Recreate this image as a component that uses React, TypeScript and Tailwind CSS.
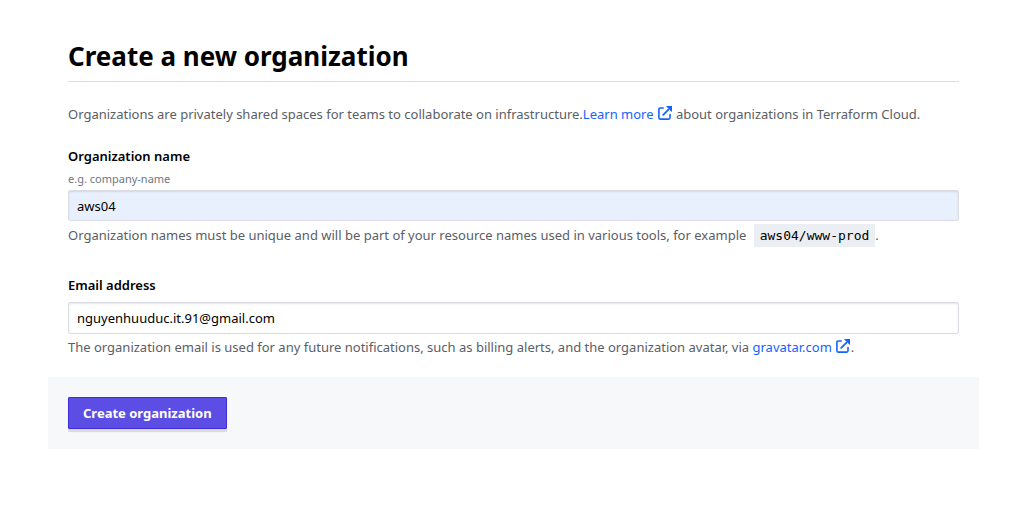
import { useState } from "react";
import type { ReactNode } from "react";

function ExternalIcon() {
  return (
    <svg
      viewBox="0 0 14 14"
      className="mr-px ml-1 inline-block h-3.5 w-3.5 align-[-1px]"
      fill="none"
      stroke="currentColor"
      aria-hidden="true"
    >
      <path
        d="M5.2 2H2.2A1.3 1.3 0 0 0 0.9 3.3V11.8A1.3 1.3 0 0 0 2.2 13.1H10.7A1.3 1.3 0 0 0 12 11.8V8.6"
        strokeWidth="1.6"
        strokeLinecap="round"
      />
      <path d="M5.2 8.8L12.2 1.8" strokeWidth="1.8" strokeLinecap="round" />
      <path d="M8 0H14V6L12 4.2V2H9.8Z" fill="currentColor" stroke="none" />
    </svg>
  );
}

function ExternalLink({ href, children }: { href: string; children: ReactNode }) {
  return (
    <a href={href} className="text-[#1563ff] hover:underline">
      {children}
      <ExternalIcon />
    </a>
  );
}

const inputClass =
  "block w-full rounded-[2px] border border-[#dbdde6] px-2 text-[13px] leading-5 text-black shadow-[inset_0_1px_2px_rgba(0,0,0,0.1)] outline-none focus:border-[#5c4ee5]";

export default function App() {
  const [name, setName] = useState("aws04");
  const [email, setEmail] = useState("nguyenhuuduc.it.91@gmail.com");

  return (
    <main className="bg-white pr-[35px] pl-12 pt-10 font-['Noto_Sans','Open_Sans',sans-serif] text-[13px] leading-5 text-[#5a5e66]">
      <form onSubmit={(e) => e.preventDefault()}>
        <div className="px-5">
          <h1 className="border-b border-[#dcdcdc] pb-[9px] text-[26px] leading-8 font-bold text-black">
            Create a new organization
          </h1>
          <p className="mt-[22px]">
            Organizations are privately shared spaces for teams to collaborate on infrastructure.
            <ExternalLink href="#organizations">Learn more</ExternalLink> about organizations in
            Terraform Cloud.
          </p>

          <div className="mt-[22px]">
            <label htmlFor="org-name" className="block font-semibold text-black">
              Organization name
            </label>
            <p id="org-hint" className="mt-[3px] mb-px text-[11px] text-[#6f7682]">
              e.g. company-name
            </p>
            <input
              id="org-name"
              aria-describedby="org-hint"
              value={name}
              onChange={(e) => setName(e.target.value)}
              className={`${inputClass} h-[31px] bg-[#e8f0fe]`}
            />
            <p className="mt-1">
              Organization names must be unique and will be part of your resource names used in
              various tools, for example{" "}
              <code className="ml-1 bg-[#ebeef2] px-1.5 py-1 font-['DejaVu_Sans_Mono','Liberation_Mono',monospace] text-[13px] text-black">
                {name}/www-prod
              </code>
              .
            </p>
          </div>

          <div className="mt-[29px]">
            <label htmlFor="email" className="block font-semibold text-black">
              Email address
            </label>
            <input
              id="email"
              type="email"
              value={email}
              onChange={(e) => setEmail(e.target.value)}
              className={`${inputClass} mt-[7px] h-8 bg-white`}
            />
            <p className="mt-[3px]">
              The organization email is used for any future notifications, such as billing alerts,
              and the organization avatar, via{" "}
              <ExternalLink href="#gravatar">gravatar.com</ExternalLink>.
            </p>
          </div>
        </div>

        <div className="mt-5 bg-[#f7f8fa] p-5">
          <button
            type="submit"
            className="block h-8 rounded-[1px] border border-[#3d2cd8] bg-[#5c4ee5] px-3.5 font-bold text-white shadow-[0_3px_1px_rgba(0,0,0,0.12)]"
          >
            Create organization
          </button>
        </div>
      </form>
    </main>
  );
}
